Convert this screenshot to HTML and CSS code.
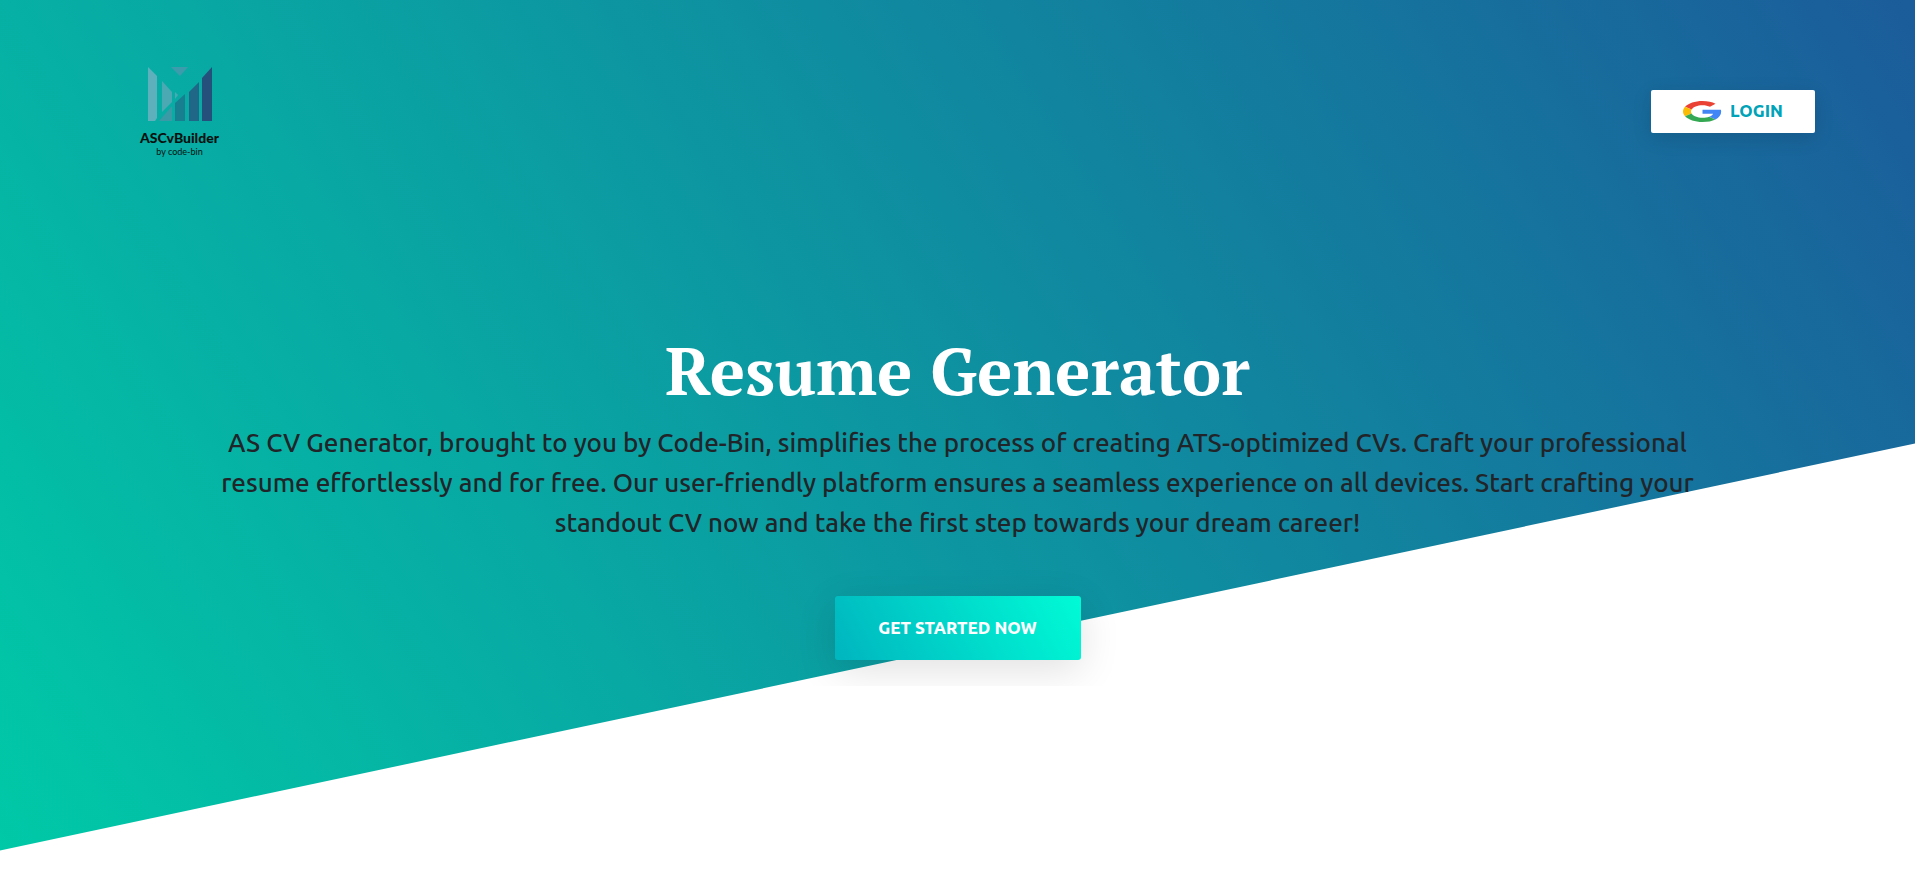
FILE: index.html
```html
<!DOCTYPE html>
<html lang="en">
<head>
<meta charset="utf-8">
<meta name="viewport" content="width=device-width, initial-scale=1">
<title>AS CV Builder</title>
<link rel="stylesheet" href="styles.css">
</head>
<body>
<div class="page">
  <div class="backdrop"></div>
  <header class="topbar">
    <a class="brand" href="#" aria-label="ASCvBuilder by code-bin">
      <svg class="brand-mark" viewBox="0 0 66 56" aria-hidden="true">
        <path fill="#5fb0bd" d="M1 1l9 9v42l-2 3H1z"/>
        <path fill="#4aa9b3" d="M15 15l10 11v10L15 46z"/>
        <path fill="#3d9cab" d="M24 1h17l-8 9z"/>
        <path fill="#4aa9b3" d="M28 26l3 3-3 4z"/>
        <path fill="#3a9aa6" d="M12 55l13-15v15z"/>
        <path fill="#187f91" d="M28 37l10-9v27H28z"/>
        <path fill="#206686" d="M42 26l10-10v39H42z"/>
        <path fill="#26507c" d="M55 12L65 1v54H55z"/>
      </svg>
      <span class="brand-name">ASCvBuilder</span>
      <span class="brand-by">by code-bin</span>
    </a>
    <button class="login" type="button">
      <svg class="google" viewBox="0 0 48 48" preserveAspectRatio="none" aria-hidden="true">
        <path fill="#ea4335" d="M24 9.500c3.540 0 6.710 1.220 9.210 3.600l6.850-6.850C35.900 2.380 30.470 0 24 0 14.620 0 6.510 5.380 2.560 13.220l7.980 6.190C12.430 13.720 17.740 9.500 24 9.500z"/>
        <path fill="#4285f4" d="M46.980 24.550c0-1.570-.15-3.090-.38-4.550H24v9.020h12.940c-.58 2.960-2.260 5.480-4.780 7.180l7.730 6c4.510-4.180 7.090-10.360 7.090-17.650z"/>
        <path fill="#fbbc05" d="M10.530 28.590c-.48-1.450-.76-2.990-.76-4.590s.27-3.140.76-4.590l-7.980-6.190C.92 16.460 0 20.120 0 24c0 3.880.92 7.540 2.560 10.780l7.970-6.190z"/>
        <path fill="#34a853" d="M24 48c6.480 0 11.930-2.130 15.890-5.810l-7.730-6c-2.150 1.450-4.920 2.300-8.160 2.300-6.260 0-11.570-4.220-13.470-9.910l-7.980 6.190C6.510 42.620 14.620 48 24 48z"/>
      </svg>
      LOGIN
    </button>
  </header>
  <main class="hero">
    <h1 class="title">Resume Generator</h1>
    <p class="lead">AS CV Generator, brought to you by Code-Bin, simplifies the process of creating ATS-optimized CVs. Craft your professional resume effortlessly and for free. Our user-friendly platform ensures a seamless experience on all devices. Start crafting your standout CV now and take the first step towards your dream career!</p>
    <button class="cta" type="button">GET STARTED NOW</button>
  </main>
</div>
</body>
</html>
```
FILE: styles.css
```css
* { box-sizing: border-box; }
body {
  margin: 0;
  background: #fff;
  color: #212529;
  font-family: Ubuntu, "Noto Sans", sans-serif;
}
.page {
  position: relative;
  margin-right: 5px;
  overflow: hidden;
  min-height: 100vh;
}
.backdrop {
  position: absolute;
  left: 0;
  right: 0;
  top: -204px;
  height: 851px;
  background: linear-gradient(60deg, #00c9a7, #1e5099);
  transform: skewY(-12deg);
}
.topbar {
  position: relative;
  display: flex;
  justify-content: space-between;
  align-items: center;
  padding: 61px 100px 0 130px;
}
.brand {
  display: flex;
  flex-direction: column;
  align-items: center;
  width: 99px;
  height: 100px;
  padding-top: 5px;
  color: #05100f;
  text-decoration: none;
}
.brand-mark { width: 66px; height: 56px; }
.brand-name {
  margin-top: 6px;
  font: 900 14px/20px Lato, sans-serif;
}
.brand-by { font: 9px/8px Lato, sans-serif; }
.login {
  display: flex;
  align-items: center;
  justify-content: center;
  gap: 8px;
  width: 164px;
  height: 43px;
  border: 0;
  border-radius: 2px;
  background: #fff;
  color: #00a3b8;
  font: 800 17px/24px Ubuntu, "Noto Sans", sans-serif;
  box-shadow: 0 5px 20px rgba(0, 0, 0, .12);
}
.google { width: 39px; height: 21px; }
.hero {
  position: relative;
  display: flex;
  flex-direction: column;
  align-items: center;
  padding: 167px 200px 26px;
  overflow: hidden;
  text-align: center;
}
.title {
  margin: 0;
  color: #fff;
  font: bold 66px/84px "PT Serif", "Liberation Serif", serif;
}
.lead {
  max-width: 1500px;
  margin: 11px 0 53px;
  font-size: 26px;
  font-weight: 500;
  line-height: 40px;
}
.cta {
  width: 246px;
  height: 64px;
  border: 0;
  border-radius: 3px;
  background: linear-gradient(60deg, #00b5bf, #00fbd6);
  color: #fff;
  font: 800 17px/24px Ubuntu, "Noto Sans", sans-serif;
  box-shadow: 0 10px 40px rgba(0, 0, 0, .12);
}
```
